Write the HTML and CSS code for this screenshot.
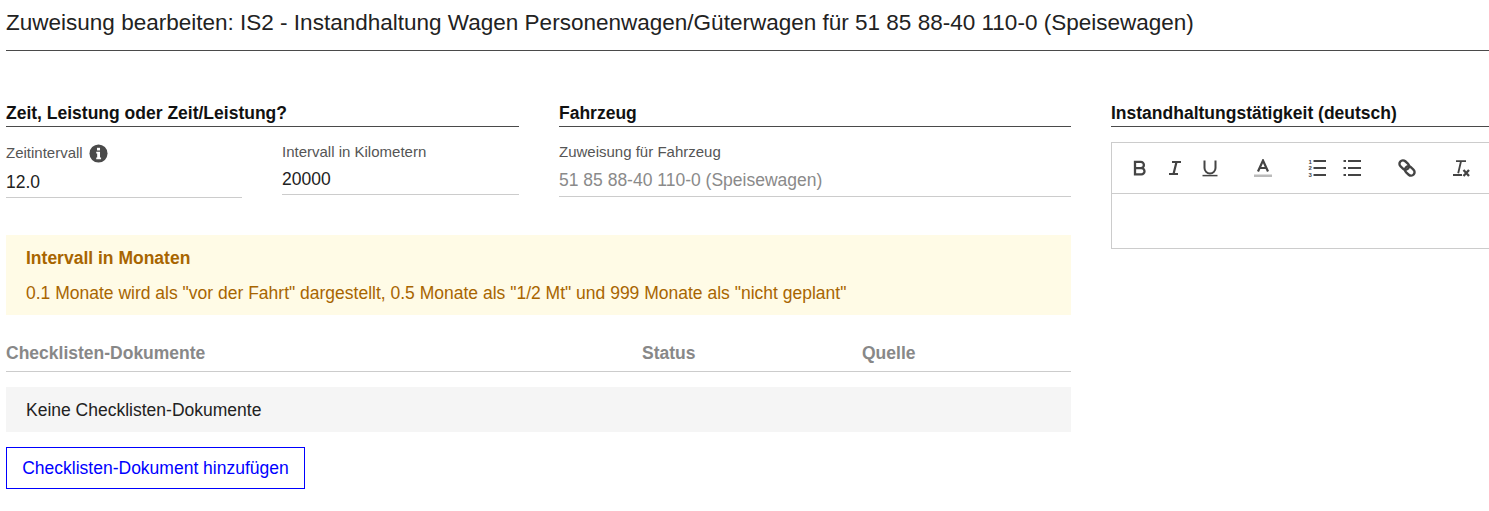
FILE: index.html
```html
<!DOCTYPE html>
<html>

<head>
    <meta charset="UTF-8">
    <title>Zuweisung bearbeiten</title>
    <link rel="stylesheet" href="styles.css">
</head>

<body>
    <h1 class="title">Zuweisung bearbeiten: IS2 - Instandhaltung Wagen Personenwagen/Güterwagen für 51 85 88-40 110-0 (Speisewagen)</h1>
    <div class="content">
        <div class="left">
            <div class="top">
                <section>
                    <h2 class="section-head">Zeit, Leistung oder Zeit/Leistung?</h2>
                    <div class="fields">
                        <div class="field field-time">
                            <label class="field-label">Zeitintervall
                                <svg class="info" viewBox="0 0 20 20">
                                    <circle cx="10" cy="10" r="9.5" fill="#4a4a4a" />
                                    <rect x="8.4" y="4" width="3.2" height="2.8" fill="#fff" />
                                    <path d="M7.6 8.2h4v6h1.100v1.800H7.600v-1.800h1v-4.200h-1z" fill="#fff" />
                                </svg>
                            </label>
                            <div class="field-value">12.0</div>
                        </div>
                        <div class="field">
                            <label class="field-label">Intervall in Kilometern</label>
                            <div class="field-value">20000</div>
                        </div>
                    </div>
                </section>
                <section>
                    <h2 class="section-head">Fahrzeug</h2>
                    <div class="field">
                        <label class="field-label">Zuweisung für Fahrzeug</label>
                        <div class="field-value disabled">51 85 88-40 110-0 (Speisewagen)</div>
                    </div>
                </section>
            </div>

            <div class="notice">
                <h3 class="notice-head">Intervall in Monaten</h3>
                <p class="notice-text">0.1 Monate wird als "vor der Fahrt" dargestellt, 0.5 Monate als "1/2 Mt" und 999 Monate als "nicht geplant"</p>
            </div>

            <div class="table-head">
                <span class="col-doc">Checklisten-Dokumente</span>
                <span class="col-status">Status</span>
                <span>Quelle</span>
            </div>
            <div class="empty-row">Keine Checklisten-Dokumente</div>
            <a href="#" class="add-btn">Checklisten-Dokument hinzufügen</a>
        </div>

        <div class="right">
            <h2 class="section-head">Instandhaltungstätigkeit (deutsch)</h2>
            <div class="editor">
                <div class="toolbar">
                    <svg class="tool" viewBox="0 0 18 18"><path d="M4 2.900h5.800a3.100 3.100 0 0 1 0 6.200H4zM4 9.100h6.400a3.100 3.100 0 0 1 0 6.200H4z" fill="none" stroke="#444" stroke-width="2.300" /></svg>
                    <svg class="tool" viewBox="0 0 18 18"><path d="M6 3h9M3 15h9M10.500 3l-3 12" fill="none" stroke="#444" stroke-width="2.200" /></svg>
                    <svg class="tool" viewBox="0 0 18 18"><path d="M3.500 1.500v7.500a5.500 5.500 0 0 0 11 0V1.500" fill="none" stroke="#444" stroke-width="2" /><path d="M1.500 16.600h15" stroke="#444" stroke-width="1.500" /></svg>
                    <svg class="tool t-color" viewBox="0 0 18 18"><path d="M4 12.500L9 1.500l5 11M5.800 9h6.400" fill="none" stroke="#444" stroke-width="2.200" /><rect x="0" y="15.500" width="18" height="2.500" fill="#bbb" /></svg>
                    <svg class="tool t-ol" viewBox="0 0 18 18">
                        <path d="M5.500 2h13M5.500 9h13M5.500 16h13" stroke="#444" stroke-width="2" />
                        <text x="0.500" y="4.500" class="num">1</text><text x="0.500" y="11" class="num">2</text><text x="0.500" y="17.500" class="num">3</text>
                    </svg>
                    <svg class="tool" viewBox="0 0 18 18"><path d="M5 2h13M5 9h13M5 16h13" stroke="#444" stroke-width="2" /><path d="M.5 2h2.500M.5 9h2.500M.5 16h2.500" stroke="#444" stroke-width="2" /></svg>
                    <svg class="tool t-link" viewBox="0 0 18 18"><g fill="none" stroke="#444" stroke-width="2.400"><rect x="1" y="2.500" width="10.500" height="7" rx="3.500" transform="rotate(42 6.200 6)" /><rect x="6.500" y="8.500" width="10.500" height="7" rx="3.500" transform="rotate(42 11.800 12)" /></g></svg>
                    <svg class="tool t-clear" viewBox="0 0 18 18"><path d="M4 2.200h10M9 2.200l-2.800 12M1 16h9" fill="none" stroke="#444" stroke-width="1.800" /><path d="M11.500 11l5.500 6M17 11l-5.500 6" stroke="#444" stroke-width="2.300" /></svg>
                </div>
                <div class="editor-body"></div>
            </div>
        </div>
    </div>
</body>

</html>
```

FILE: styles.css
```css
* {
    margin: 0;
    padding: 0;
    box-sizing: border-box;
}

body {
    font-family: "Liberation Sans", Arial, sans-serif;
    font-size: 17.5px;
    color: #222;
    background: #fff;
    padding-left: 6px;
    overflow: hidden;
}

.title {
    font-size: 22.52px;
    font-weight: normal;
    line-height: 26px;
    padding-top: 10px;
    height: 51px;
    border-bottom: 1px solid #4a4a4a;
    color: #222;
}

.content {
    display: flex;
    gap: 40px;
    padding-top: 51px;
}

.left {
    width: 1065px;
    flex: none;
}

.right {
    width: 400px;
    flex: none;
}

.top {
    display: grid;
    grid-template-columns: 513px 512px;
    gap: 40px;
}

.section-head {
    font-size: 17.5px;
    font-weight: bold;
    line-height: 20px;
    height: 25px;
    padding-top: 1px;
    border-bottom: 1px solid #4a4a4a;
    color: #111;
}

.fields {
    display: grid;
    grid-template-columns: 236px 237px;
    gap: 40px;
}

.field-label {
    display: block;
    font-size: 15px;
    line-height: 16px;
    color: #555;
    padding-top: 17px;
}

.info {
    width: 19px;
    height: 19px;
    margin-left: 2px;
    vertical-align: -5px;
}

.field-value {
    line-height: 20px;
    padding-top: 9px;
    height: 35px;
    border-bottom: 1px solid #ccc;
    color: #222;
}

.field-value.disabled {
    color: #8a8a8a;
    height: 37px;
    padding-top: 10px;
}

.notice {
    background: #fffbe6;
    height: 80px;
    margin-top: 37px;
    padding: 13px 20px 0;
    color: #a86500;
}

.notice-head {
    font-size: 17.5px;
    font-weight: bold;
    line-height: 20px;
}

.notice-text {
    line-height: 20px;
    margin-top: 15px;
}

.table-head {
    display: flex;
    height: 57px;
    padding-top: 28px;
    line-height: 20px;
    font-weight: bold;
    color: #888;
    border-bottom: 1px solid #ccc;
}

.col-doc {
    width: 636px;
}

.col-status {
    width: 220px;
}

.empty-row {
    background: #f5f5f5;
    height: 45px;
    margin-top: 15px;
    padding: 13px 20px 0;
    line-height: 20px;
    color: #222;
}

.add-btn {
    display: block;
    width: 299px;
    height: 42px;
    margin-top: 15px;
    border: 1px solid #00f;
    color: #00f;
    text-align: center;
    line-height: 40px;
    text-decoration: none;
}

.editor {
    margin-top: 15px;
    border: 1px solid #ccc;
    height: 107px;
}

.toolbar {
    display: flex;
    align-items: center;
    gap: 17px;
    height: 51px;
    border-bottom: 1px solid #ccc;
    padding-left: 19px;
}

.tool {
    width: 18px;
    height: 18px;
    flex: none;
}

.t-color {
    margin-left: 18px;
}

.t-ol {
    margin-left: 19px;
}

.t-link {
    margin-left: 20px;
}

.t-clear {
    margin-left: 19px;
}

.num {
    font-family: "Liberation Sans", sans-serif;
    font-size: 6px;
    font-weight: bold;
    fill: #444;
}
```
